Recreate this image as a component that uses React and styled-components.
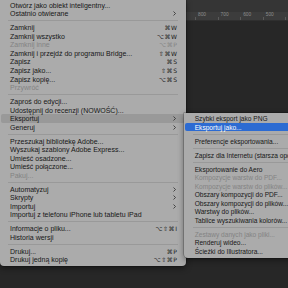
import React from "react";
import styled, { createGlobalStyle } from "styled-components";

const GlobalStyle = createGlobalStyle`
  html, body { margin: 0; padding: 0; background: #272727; overflow: hidden; }
  #root { width: 288px; height: 288px; }
`;

const Page = styled.div`
  position: relative;
  width: 288px;
  height: 288px;
  display: flex;
  flex-direction: column;
  overflow: hidden;
  font-family: "Liberation Sans", Arial, sans-serif;
`;

const TopBar = styled.div`
  height: 12px;
  background: #353535;
`;

const Ruler = styled.div`
  height: 8px;
  background: #3c3c3c;
  border-bottom: 1px solid #2f2f2f;
  display: flex;
  padding-left: 195px;
`;

const Tick = styled.div`
  width: 21.6px;
  flex: none;
  border-left: 1px solid #5a5a5a;
  height: 3px;
  margin-top: 5px;
  position: relative;
  & > span {
    position: absolute;
    left: 2px;
    top: -5px;
    font-size: 4.8px;
    color: #8c8c8c;
    line-height: 6px;
  }
`;

const Canvas = styled.div`
  flex: 1;
  background: #272727;
`;

const MenuPanel = styled.div`
  position: absolute;
  left: ${(p) => p.$left}px;
  top: ${(p) => p.$top}px;
  width: ${(p) => p.$width}px;
  background: #ababab;
  padding: ${(p) => p.$pad};
  box-sizing: border-box;
  border-radius: 0 0 4px 4px;
  box-shadow: 0 2px 6px rgba(0, 0, 0, 0.45), 0 0 0 0.5px rgba(0, 0, 0, 0.35);
  color: #161616;
  font-size: ${(p) => p.$font}px;
`;

const Row = styled.div`
  display: flex;
  align-items: center;
  height: 8.55px;
  margin: 0 1px;
  padding: 0 ${(p) => p.$padR}px 0 ${(p) => p.$padL}px;
  border-radius: 2px;
  white-space: nowrap;
  background: ${(p) =>
    p.$hl === "gray" ? "#999999" : p.$hl === "blue" ? "#2c6bd2" : "transparent"};
  color: ${(p) =>
    p.$hl === "blue" ? "#ffffff" : p.$disabled ? "#838383" : "#171717"};
`;

const Label = styled.span`
  flex: 1;
`;

const Shortcut = styled.span`
  font-family: "DejaVu Sans", sans-serif;
  font-size: 6px;
  letter-spacing: 0.6px;
  margin-right: -0.6px;
`;

const Separator = styled.div`
  height: 5.4px;
  display: flex;
  align-items: center;
  margin: 0 ${(p) => p.$inset}px;
  &::after {
    content: "";
    flex: 1;
    height: 1px;
    background: #999999;
  }
`;

const Chevron = () => (
  <svg width="3" height="5" viewBox="0 0 3 5" style={{ marginRight: 1 }}>
    <path d="M0.5 0.5 L2.5 2.5 L0.5 4.5" fill="none" stroke="#2a2a2a" strokeWidth="0.8" />
  </svg>
);

const mainItems = [
  { l: "Otwórz jako obiekt inteligentny..." },
  { l: "Ostatnio otwierane", arrow: true },
  "sep",
  { l: "Zamknij", s: "⌘W" },
  { l: "Zamknij wszystko", s: "⌥⌘W" },
  { l: "Zamknij inne", s: "⌥⌘P", d: true },
  { l: "Zamknij i przejdź do programu Bridge...", s: "⇧⌘W" },
  { l: "Zapisz", s: "⌘S" },
  { l: "Zapisz jako...", s: "⇧⌘S" },
  { l: "Zapisz kopię...", s: "⌥⌘S" },
  { l: "Przywróć", d: true },
  "sep",
  { l: "Zaproś do edycji..." },
  { l: "Udostępnij do recenzji (NOWOŚĆ)..." },
  { l: "Eksportuj", arrow: true, hl: "gray" },
  { l: "Generuj", arrow: true },
  "sep",
  { l: "Przeszukaj bibliotekę Adobe..." },
  { l: "Wyszukaj szablony Adobe Express..." },
  { l: "Umieść osadzone..." },
  { l: "Umieść połączone..." },
  { l: "Pakuj...", d: true },
  "sep",
  { l: "Automatyzuj", arrow: true },
  { l: "Skrypty", arrow: true },
  { l: "Importuj", arrow: true },
  { l: "Importuj z telefonu iPhone lub tabletu iPad" },
  "sep",
  { l: "Informacje o pliku...", s: "⌥⇧⌘I" },
  { l: "Historia wersji" },
  "sep",
  { l: "Drukuj...", s: "⌘P" },
  { l: "Drukuj jedną kopię", s: "⌥⇧⌘P" },
];

const subItems = [
  { l: "Szybki eksport jako PNG" },
  { l: "Eksportuj jako...", hl: "blue" },
  "sep",
  { l: "Preferencje eksportowania..." },
  "sep",
  { l: "Zapisz dla Internetu (starsza opcja)..." },
  "sep",
  { l: "Eksportowanie do Aero" },
  { l: "Kompozycje warstw do PDF...", d: true },
  { l: "Kompozycje warstw do plików...", d: true },
  { l: "Obszary kompozycji do PDF..." },
  { l: "Obszary kompozycji do plików..." },
  { l: "Warstwy do plików..." },
  { l: "Tablice wyszukiwania kolorów..." },
  "sep",
  { l: "Zestawy danych jako pliki...", d: true },
  { l: "Renderuj wideo..." },
  { l: "Ścieżki do Illustratora..." },
];

const Menu = ({ items, left, top, width, pad, padL, padR, inset, font }) => (
  <MenuPanel $left={left} $top={top} $width={width} $pad={pad} $font={font}>
    {items.map((it, i) =>
      it === "sep" ? (
        <Separator key={i} $inset={inset} />
      ) : (
        <Row key={i} $hl={it.hl} $disabled={it.d} $padL={padL} $padR={padR}>
          <Label>{it.l}</Label>
          {it.s && <Shortcut>{it.s}</Shortcut>}
          {it.arrow && <Chevron />}
        </Row>
      )
    )}
  </MenuPanel>
);

export default function App() {
  const ticks = ["800", "700", "600", "500", "40"];
  return (
    <>
      <GlobalStyle />
      <Page>
        <TopBar />
        <Ruler>
          {ticks.map((t) => (
            <Tick key={t}>
              <span>{t}</span>
            </Tick>
          ))}
        </Ruler>
        <Canvas />
        <Menu
          items={mainItems}
          left={0}
          top={0}
          width={186}
          pad="1px 0 1.5px 0"
          padL={9}
          padR={8}
          inset={8}
          font={7}
        />
        <Menu
          items={subItems}
          left={184}
          top={112.7}
          width={130}
          pad="1.7px 0 2.4px 0"
          padL={9.7}
          padR={8}
          inset={9}
          font={6.6}
        />
      </Page>
    </>
  );
}
